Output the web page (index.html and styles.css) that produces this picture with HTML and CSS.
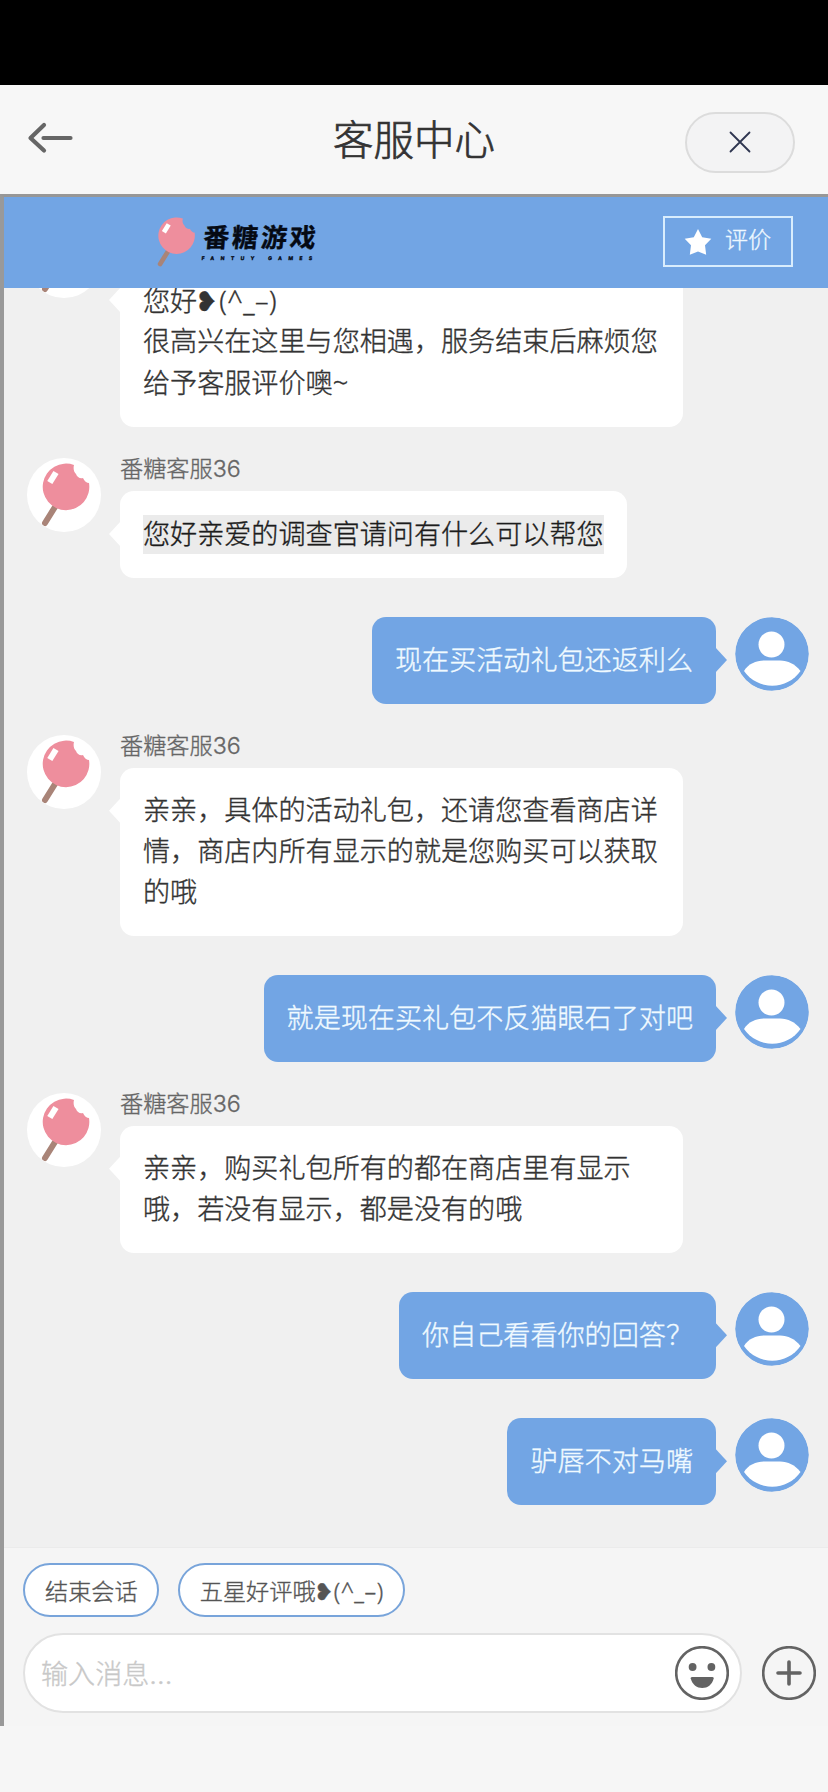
FILE: index.html
```html
<!DOCTYPE html>
<html lang="zh-CN">
<head>
<meta charset="utf-8">
<title>客服中心</title>
<link rel="stylesheet" href="styles.css">
</head>
<body>
<svg width="0" height="0" class="defs" aria-hidden="true">
  <symbol id="lolly" viewBox="0 0 74 74">
    <path d="M28 49 L18 65" stroke="#a98478" stroke-width="6" stroke-linecap="round"/>
    <path d="M47 7 C46 11 47 14 49 16 C50 19 53 21 56 20 C57 23 60 25 62 25 A23.3 23.3 0 1 1 47 7 Z" fill="#ee8e9d"/>
    <path d="M22.800 24.500 L29 14.500" stroke="#fff" stroke-width="6" stroke-linecap="butt"/>
  </symbol>
  <symbol id="user" viewBox="0 0 74 74">
    <circle cx="37" cy="37" r="36.800" fill="#72a5e4"/>
    <circle cx="36.500" cy="27.500" r="13" fill="#fff"/>
    <path d="M9 54 C13 47 21 43.500 29 43.500 H45 C53 43.500 60 47 65.500 54 A34.500 34.500 0 0 1 9 54 Z" fill="#fff"/>
  </symbol>
</svg>
<div class="phone">
  <div class="status"></div>
  <header class="nav">
    <svg class="back" width="46" height="32" viewBox="0 0 46 32" fill="none" stroke="#666" stroke-width="4.200" stroke-linecap="round" stroke-linejoin="round"><path d="M17 3 L3.500 16 L17 28.500 M16.500 16 H43.500"/></svg>
    <h1 class="title">客服中心</h1>
    <button class="close"><svg width="22" height="22" viewBox="0 0 22 22" stroke="#2e3550" stroke-width="1.800" stroke-linecap="round"><path d="M1.500 1.500 L20.500 20.500 M20.500 1.500 L1.500 20.500"/></svg></button>
  </header>
  <main class="web">
    <div class="brandbar">
      <svg class="brandicon" width="58" height="58"><use href="#lolly"/></svg>
      <div class="brand"><span class="brandname">番糖游戏</span><span class="brandsub">FANTUY GAMES</span></div>
      <button class="rate"><svg width="28" height="28" viewBox="0 0 28 28" fill="#fff"><path d="M14 1 L18.200 9.300 L27.300 10.800 L21 17.300 L22.200 26.800 L14 23.500 L5.800 26.800 L7 17.300 L0.700 10.800 L9.800 9.300 Z"/></svg><span>评价</span></button>
    </div>
    <section class="chat">
      <div class="msg agent"><svg class="avatar"><use href="#lolly"/></svg><div><div class="name">番糖客服36</div><div class="bubble">您好<span class="heart">❥</span><span class="face">(^_–)</span><br>很高兴在这里与您相遇，服务结束后麻烦您给予客服评价噢<span class="face">~</span></div></div></div>
      <div class="msg agent"><svg class="avatar"><use href="#lolly"/></svg><div><div class="name">番糖客服36</div><div class="bubble"><span class="mark">您好亲爱的调查官请问有什么可以帮您</span></div></div></div>
      <div class="msg mine"><div class="bubble">现在买活动礼包还返利么</div><svg class="avatar"><use href="#user"/></svg></div>
      <div class="msg agent"><svg class="avatar"><use href="#lolly"/></svg><div><div class="name">番糖客服36</div><div class="bubble">亲亲，具体的活动礼包，还请您查看商店详情，商店内所有显示的就是您购买可以获取的哦</div></div></div>
      <div class="msg mine"><div class="bubble">就是现在买礼包不反猫眼石了对吧</div><svg class="avatar"><use href="#user"/></svg></div>
      <div class="msg agent"><svg class="avatar"><use href="#lolly"/></svg><div><div class="name">番糖客服36</div><div class="bubble">亲亲，购买礼包所有的都在商店里有显示哦，若没有显示，都是没有的哦</div></div></div>
      <div class="msg mine"><div class="bubble">你自己看看你的回答？</div><svg class="avatar"><use href="#user"/></svg></div>
      <div class="msg mine"><div class="bubble">驴唇不对马嘴</div><svg class="avatar"><use href="#user"/></svg></div>
    </section>
    <footer class="composer">
      <div class="chips"><button class="chip">结束会话</button><button class="chip">五星好评哦<span class="heart">❥</span><span class="face">(^_–)</span></button></div>
      <div class="inputrow">
        <div class="input"><span class="hint">输入消息...</span>
          <svg width="54" height="54" viewBox="0 0 54 54"><circle cx="27" cy="27" r="25.800" fill="none" stroke="#636363" stroke-width="2.600"/><circle cx="17.600" cy="21" r="3.900" fill="#636363"/><circle cx="36.400" cy="21" r="3.900" fill="#636363"/><path d="M17 31 H37.500 Q39 31 38.700 32.500 C37 39 32.500 42 27.200 42 C22 42 17.500 39 15.700 32.500 Q15.400 31 17 31 Z" fill="#636363"/></svg>
        </div>
        <svg width="54" height="54" viewBox="0 0 54 54" fill="none" stroke="#636363" stroke-linecap="round"><circle cx="27" cy="27" r="25.800" stroke-width="2.600"/><path d="M27 16 V38 M16 27 H38" stroke-width="3.600"/></svg>
      </div>
    </footer>
  </main>
</div>
</body>
</html>
```
FILE: styles.css
```css
* { box-sizing: border-box; }
body {
  margin: 0;
  font-family: "Inter", "Noto Sans CJK SC", sans-serif;
  font-weight: 300;
  color: #333;
  -webkit-text-stroke: 0.35px currentColor;
}
button { font: inherit; color: inherit; padding: 0; }
.defs { position: absolute; }
.phone { width: 828px; height: 1792px; background: #f6f6f6; overflow: hidden; }
.status { height: 85px; background: #000; }
.nav {
  height: 109px;
  display: grid;
  grid-template-columns: 1fr auto 1fr;
  align-items: center;
  background: #f7f7f7;
}
.back { margin: -3px 0 0 27px; }
.title { margin: 2px 0 0; font-size: 40.500px; line-height: 50px; font-weight: 300; -webkit-text-stroke-width: 0.7px; }
.close {
  justify-self: end;
  width: 110px;
  height: 61px;
  margin: 5px 33px 0 0;
  border: 2px solid #dcdcdc;
  border-radius: 31px;
  background: #f3f3f4;
  display: flex;
  align-items: center;
  justify-content: center;
}
.web {
  height: 1532px;
  border-top: 3px solid #979797;
  border-left: 4px solid #999;
  display: flex;
  flex-direction: column;
}
.brandbar { height: 91px; flex: none; display: flex; align-items: center; background: #72a5e4; padding: 0 35px 0 142px; }
.brandicon { margin-top: -1px; }
.brand { display: flex; flex-direction: column; margin: -2px 0 0 -1px; flex: 1; color: #050a14; transform: skewX(-5deg); }
.brandname { font-size: 26px; line-height: 32px; font-weight: 700; letter-spacing: 2.800px; }
.brandsub { font-size: 5px; line-height: 8px; font-weight: 700; letter-spacing: 6.400px; white-space: nowrap; }
.rate {
  width: 130px;
  height: 51px;
  margin-top: -2px;
  border: 2px solid #d9edfd;
  background: none;
  display: flex;
  align-items: center;
  padding-left: 19px;
  gap: 13px;
  color: #eef8ff;
  font-size: 23px;
  line-height: 30px;
}
.rate span { margin-top: -3px; }
.chat {
  height: 1259px;
  flex: none;
  overflow: hidden;
  display: flex;
  flex-direction: column;
  justify-content: flex-end;
  gap: 31px;
  padding: 0 19px 42px 23px;
  background: #f0f0f0;
}
.msg { display: flex; align-items: flex-start; gap: 19px; }
.mine { justify-content: flex-end; margin-top: 8px; }
.avatar { width: 74px; height: 74px; border-radius: 50%; background: #fff; flex: none; }
.mine .avatar { background: none; }
.name { height: 33px; font-size: 23.200px; line-height: 23px; color: #666; }
.bubble {
  position: relative;
  width: fit-content;
  max-width: 563px;
  padding: 23.600px 23px 22.700px;
  border-radius: 14px;
  background: #fff;
  font-size: 27.100px;
  line-height: 40.600px;
}
.bubble::after {
  content: "";
  position: absolute;
  top: 30px;
  left: -11px;
  width: 12px;
  height: 26px;
  background: inherit;
  clip-path: polygon(0 50%, 100% 0, 100% 100%);
}
.mine .bubble { background: #72a5e4; color: #f0faff; }
.mine .bubble::after { left: auto; right: -11px; clip-path: polygon(100% 50%, 0 0, 0 100%); }
.mark { background: #ebebeb; color: #1c1c1c; padding: 3px 0; }
.heart { margin: 0 1px 0 -2px; }
.face { font-family: "Noto Sans", sans-serif; font-weight: 300; letter-spacing: 0.500px; }
.composer { flex: 1; background: #f5f5f5; border-top: 1px solid #ebebeb; padding: 15px 12px 0 19px; }
.chips { display: flex; gap: 19px; }
.chip { height: 54px; padding: 0 19px 0 20px; border: 2px solid #78a4da; border-radius: 27px; background: #fff; color: #555; font-size: 23.200px; white-space: nowrap; }
.inputrow { display: flex; align-items: center; gap: 20px; margin-top: 16px; }
.input {
  flex: 1;
  height: 80px;
  border: 2px solid #e2e2e2;
  border-radius: 40px;
  background: #fff;
  display: flex;
  align-items: center;
  justify-content: space-between;
  padding: 0 11px 0 16px;
  font-size: 27.100px;
  color: #c8c8c8;
}
.hint { margin-top: -2px; }
```
